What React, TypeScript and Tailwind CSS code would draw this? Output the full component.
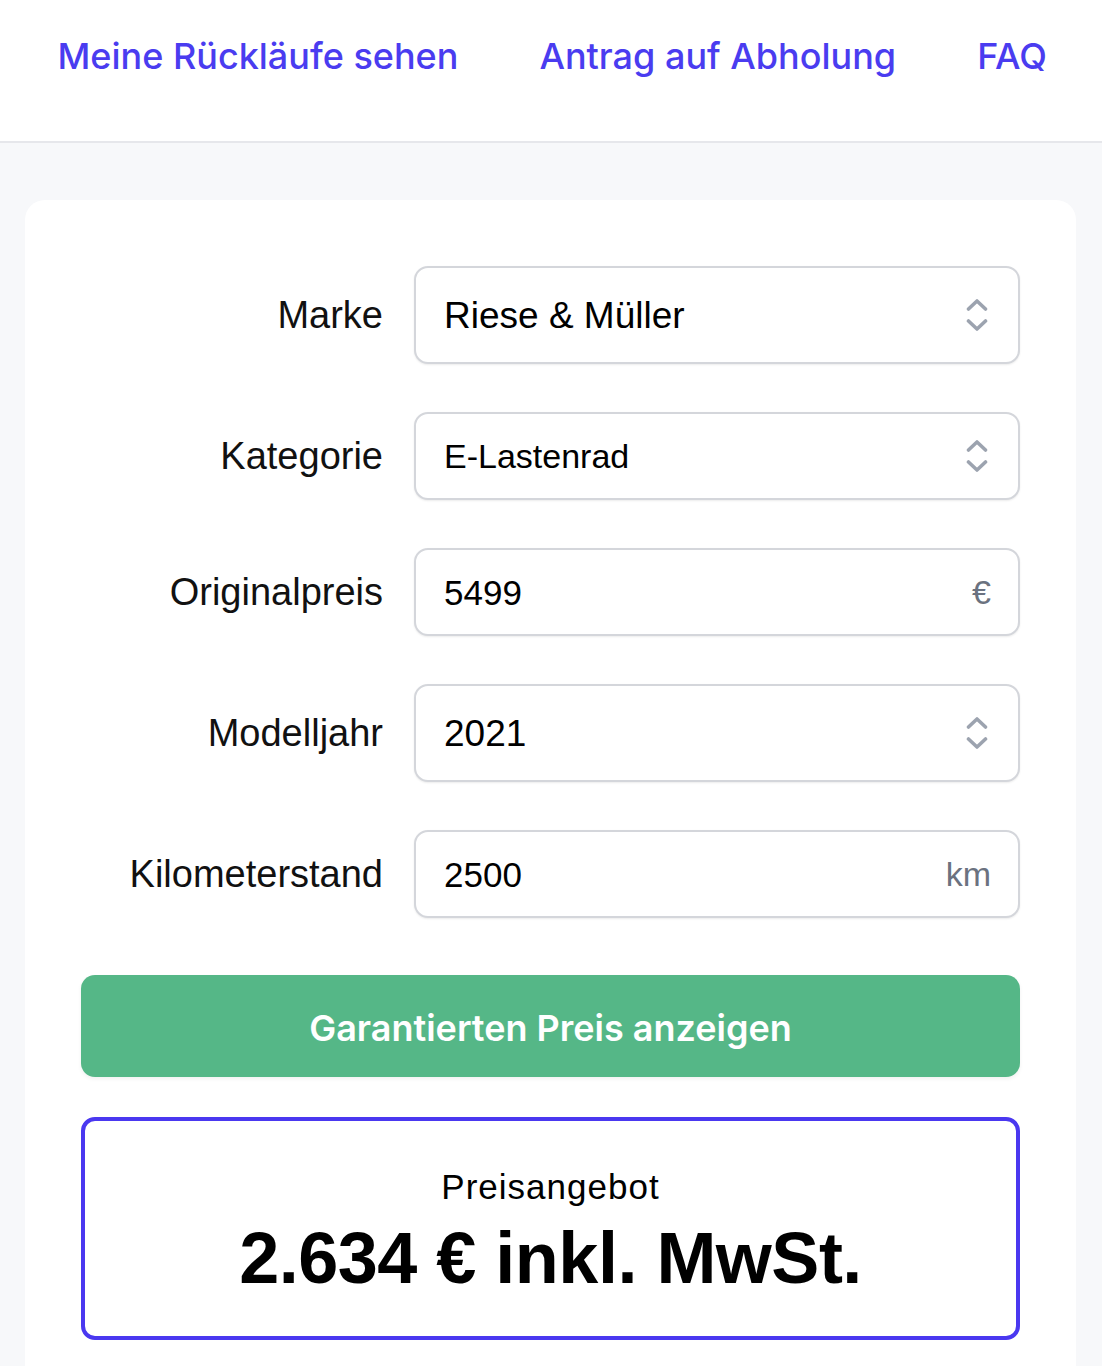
import React from "react";

function Chevrons() {
  return (
    <svg width="22" height="34" viewBox="0 0 22 34" fill="none" className="shrink-0">
      <path d="M2.5 11 L11 3 L19.5 11" stroke="#9ca3af" strokeWidth="3.6" strokeLinecap="round" strokeLinejoin="round" />
      <path d="M2.5 23 L11 31 L19.5 23" stroke="#9ca3af" strokeWidth="3.6" strokeLinecap="round" strokeLinejoin="round" />
    </svg>
  );
}

function Row({
  label,
  value,
  tall,
  size,
  suffix,
  select,
}: {
  label: string;
  value: string;
  tall?: boolean;
  size: string;
  suffix?: string;
  select?: boolean;
}) {
  return (
    <div className="flex items-center gap-[31px]">
      <div className="w-[302px] shrink-0 text-right text-[38px] leading-none text-[#111]">{label}</div>
      <div
        className={
          "flex flex-1 items-center justify-between rounded-[14px] border-2 border-[#d4d6db] bg-white pl-[28px] shadow-[0_1px_2px_rgba(0,0,0,0.08)] " +
          (tall ? "h-[98px] " : "h-[88px] ") +
          (select ? "pr-[30px]" : "pr-[27px]")
        }
      >
        <span className={"text-black leading-none " + size}>{value}</span>
        {select ? <Chevrons /> : <span className="text-[34px] leading-none text-[#6b7280]">{suffix}</span>}
      </div>
    </div>
  );
}

export default function App() {
  return (
    <div className="min-h-[1366px] bg-[#f7f8fa] font-['Liberation_Sans',Arial,sans-serif]">
      <header className="h-[143px] border-b-2 border-[#e6e7eb] bg-white">
        <nav className="flex justify-end gap-[81px] pr-[55px] pt-[33px] font-['Inter',sans-serif] text-[36px] font-medium leading-[46px] text-[#4a3cf0]">
          <a>Meine Rückläufe sehen</a>
          <a>Antrag auf Abholung</a>
          <a>FAQ</a>
        </nav>
      </header>
      <main className="px-[25px] pr-[26px] pt-[57px]">
        <div className="rounded-t-[20px] bg-white px-[56px] pb-[40px] pt-[66px]">
          <div className="flex flex-col gap-[48px]">
            <Row label="Marke" value="Riese & Müller" tall size="text-[37px]" select />
            <Row label="Kategorie" value="E-Lastenrad" size="text-[34px]" select />
            <Row label="Originalpreis" value="5499" size="text-[35px]" suffix="€" />
            <Row label="Modelljahr" value="2021" tall size="text-[37px]" select />
            <Row label="Kilometerstand" value="2500" size="text-[35px]" suffix="km" />
          </div>
          <button className="mt-[57px] flex h-[102px] w-full items-center justify-center rounded-[14px] bg-[#55b787] pt-[4px] font-['Inter',sans-serif] text-[36px] font-semibold text-white shadow-[0_2px_4px_rgba(0,0,0,0.06)]">
            Garantierten Preis anzeigen
          </button>
          <div className="mt-[40px] flex h-[223px] flex-col items-center justify-center rounded-[14px] border-[4px] border-[#4a38f0] bg-white pt-[6px]">
            <div className="text-[35px] leading-none tracking-[1px] text-black">Preisangebot</div>
            <div className="mt-[18px] text-[72px] font-bold leading-none tracking-[-0.5px] text-black">
              2.634 € inkl. MwSt.
            </div>
          </div>
        </div>
      </main>
    </div>
  );
}
